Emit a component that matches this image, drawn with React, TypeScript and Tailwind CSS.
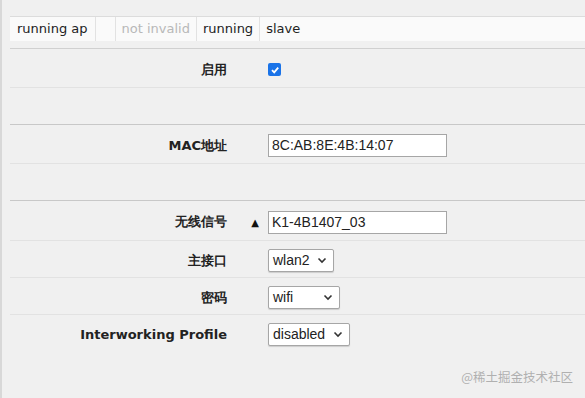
import React from 'react';

const Row: React.FC<{ label?: string; h: string; line?: string; children?: React.ReactNode; extra?: React.ReactNode }> = ({ label, h, line = 'border-[#dcdcdc]', children, extra }) => (
  <div className={`flex items-center border-b pt-[3px] ${line} ${h}`}>
    <div className="w-[217px] shrink-0 text-right text-[13px] font-bold text-[#222]">{label}</div>
    <div className="w-[41px] shrink-0 flex justify-end pr-[9px]">{extra}</div>
    <div className="flex items-center">{children}</div>
  </div>
);

const Select: React.FC<{ value: string; w: string }> = ({ value, w }) => (
  <div className={`flex items-center justify-between ${w} h-[23px] bg-white border border-[#a6a6a6] rounded-[2px] shadow-[0_1px_1px_rgba(0,0,0,0.15)] pl-[4px] pr-[6px] text-[14px] text-[#222] font-['Liberation_Sans',sans-serif]`}>
    <span>{value}</span>
    <svg width="10" height="7" viewBox="0 0 10 7">
      <path d="M1.5 1.5 L5 5 L8.5 1.5" fill="none" stroke="#333" strokeWidth="1.6" />
    </svg>
  </div>
);

export default function App() {
  return (
    <div className="w-[585px] h-[398px] bg-[#f0f0f0] border-l-2 border-[#d8d8d8] relative font-['DejaVu_Sans',sans-serif] overflow-hidden">
      <div className="pl-[8px] pt-[16px]">
        <div className="flex h-[25px] bg-[#fafafa] border-t border-[#dcdcdc] text-[13px] text-[#222]">
          <div className="px-[7px] flex items-center border-r border-[#e2e2e2]">running ap</div>
          <div className="w-[20px] border-r border-[#e2e2e2]"></div>
          <div className="px-[6px] flex items-center border-r border-[#e2e2e2] text-[#b8b8b8]">not invalid</div>
          <div className="px-[6px] flex items-center border-r border-[#e2e2e2]">running</div>
          <div className="px-[6px] flex items-center flex-1">slave</div>
        </div>
        <div className="h-[8px] border-b border-[#d0d0d0]"></div>
        <Row label="启用" h="h-[39px]" line="border-[#e2e2e2]">
          <div className="w-[13px] h-[13px] rounded-[2px] bg-[#1a73e8] flex items-center justify-center">
            <svg width="10" height="10" viewBox="0 0 10 10">
              <path d="M2 5.2 L4.2 7.4 L8.2 2.6" fill="none" stroke="#fff" strokeWidth="1.8" />
            </svg>
          </div>
        </Row>
        <div className="h-[37px] border-b border-[#c8c8c8]"></div>
        <Row label="MAC地址" h="h-[39px]" line="border-[#e2e2e2]">
          <div className="w-[179px] h-[23px] bg-white border border-[#a6a6a6] px-[3px] flex items-center text-[14px] text-[#222] font-['Liberation_Sans',sans-serif]">8C:AB:8E:4B:14:07</div>
        </Row>
        <div className="h-[37px] border-b border-[#c8c8c8]"></div>
        <Row
          label="无线信号"
          h="h-[40px]"
          line="border-[#e2e2e2]"
          extra={<span className="text-[10px] text-[#111]">▲</span>}
        >
          <div className="w-[179px] h-[23px] bg-white border border-[#a6a6a6] px-[3px] flex items-center text-[14px] text-[#222] font-['Liberation_Sans',sans-serif]">K1-4B1407_03</div>
        </Row>
        <Row label="主接口" h="h-[37px]" line="border-[#e2e2e2]">
          <Select value="wlan2" w="w-[66px]" />
        </Row>
        <Row label="密码" h="h-[37px]" line="border-[#e2e2e2]">
          <Select value="wifi" w="w-[72px]" />
        </Row>
        <Row label="Interworking Profile" h="h-[37px]" line="border-transparent">
          <Select value="disabled" w="w-[82px]" />
        </Row>
      </div>
      <div className="absolute right-[12px] bottom-[11px] text-[12.5px] text-[#b0b0b0] font-['Noto_Sans_CJK_SC',sans-serif]">@稀土掘金技术社区</div>
    </div>
  );
}
